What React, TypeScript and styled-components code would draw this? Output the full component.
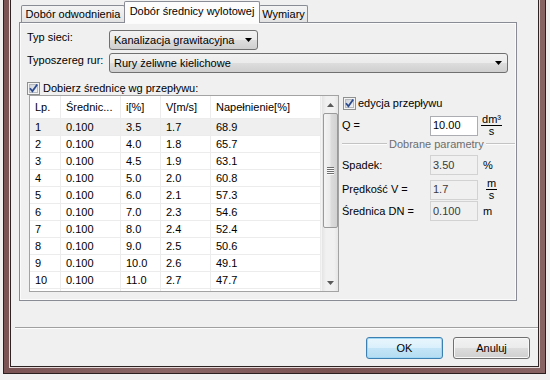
import React from 'react';
import styled, { createGlobalStyle } from 'styled-components';

const GlobalStyle = createGlobalStyle`
  html, body { margin: 0; padding: 0; background: #f0f0f0; }
  body {
    font-family: "Liberation Sans", Arial, sans-serif;
    font-size: 11px;
    color: #000;
    overflow: hidden;
  }
  * { box-sizing: border-box; }
`;

const Screen = styled.div`
  width: 550px;
  height: 380px;
  padding-left: 3px;
  background: #f0f0f0;
`;

const Frame = styled.div`
  width: 543px;
  height: 374px;
  border: 1px solid #2b1f1f;
  border-top: none;
  background: linear-gradient(90deg, #7a5454, #8a6666 30%, #785151 60%, #886363);
  padding: 0 5px 5px;
`;

const FrameInner = styled.div`
  height: 100%;
  border: 1px solid #e6d9d9;
  border-top: none;
`;

const Client = styled.div`
  height: 100%;
  border: 1px solid #2e2424;
  border-top: none;
  background: #f0f0f0;
  display: flex;
  flex-direction: column;
`;

const TabRow = styled.div`
  height: 22px;
  padding-left: 10px;
  display: flex;
  align-items: flex-end;
`;

const Tab = styled.div<{ $active?: boolean; $w: number }>`
  position: relative;
  width: ${p => p.$w}px;
  height: ${p => (p.$active ? 22 : 17)}px;
  margin-left: -1px;
  margin-bottom: ${p => (p.$active ? -1 : 0)}px;
  z-index: ${p => (p.$active ? 2 : 1)};
  border: 1px solid #898c95;
  border-bottom: none;
  border-radius: 2px 2px 0 0;
  background: ${p =>
    p.$active ? '#fcfcfc' : 'linear-gradient(#f4f4f4, #ececec 50%, #e2e2e2)'};
  display: flex;
  justify-content: center;
  padding-top: ${p => (p.$active ? 3 : 2)}px;
  line-height: 13px;
  white-space: nowrap;
  &:first-child { margin-left: 0; }
`;

const Panel = styled.div`
  margin-left: 8px;
  width: 498px;
  height: 279px;
  border: 1px solid #898c95;
  box-shadow: inset 0 0 0 1px #fbfbfb;
  background: #f0f0f0;
  padding: 7px 0 0 7px;
`;

const FormGrid = styled.div`
  display: grid;
  grid-template-columns: 82px auto;
  row-gap: 3px;
  align-items: start;
`;

const Label = styled.div`
  line-height: 13px;
  padding-top: 1px;
  white-space: nowrap;
`;

const Combo = styled.div<{ $w: number }>`
  width: ${p => p.$w}px;
  height: 20px;
  border: 1px solid #707070;
  border-radius: 3px;
  background: linear-gradient(#f2f2f2, #ebebeb 50%, #dddddd 51%, #cfcfcf);
  display: flex;
  align-items: center;
  justify-content: space-between;
  padding: 0 5px 0 4px;
  line-height: 13px;
  white-space: nowrap;
`;

const CheckRow = styled.div<{ $top: number; $gap: number; $left?: number }>`
  display: flex;
  align-items: center;
  gap: ${p => p.$gap}px;
  height: 13px;
  margin-top: ${p => p.$top}px;
  margin-left: ${p => p.$left ?? 0}px;
  line-height: 13px;
  white-space: nowrap;
`;

const BottomArea = styled.div`
  display: flex;
  align-items: flex-start;
`;

const GridBox = styled.div`
  margin-left: 2px;
  width: 310px;
  height: 197px;
  border: 1px solid #a3a3a3;
  background: #fff;
  display: flex;
`;

const Table = styled.div`
  width: 291px;
  height: 100%;
  overflow: hidden;
  display: grid;
  grid-template-columns: 31px 60px 40px 50px 110px;
  grid-template-rows: 23px;
  grid-auto-rows: 17px;
  align-content: start;
`;

const Cell = styled.div<{ $head?: boolean; $sel?: boolean }>`
  height: ${p => (p.$head ? 23 : 17)}px;
  border-right: 1px solid #ececec;
  border-bottom: 1px solid #ececec;
  background: ${p => (p.$sel ? '#efefef' : '#fff')};
  padding-left: 5px;
  display: flex;
  align-items: center;
  line-height: 13px;
  white-space: nowrap;
  overflow: hidden;
`;

const Track = styled.div`
  width: 17px;
  height: 100%;
  background: linear-gradient(90deg, #e4e4e4, #f1f1f1 25%, #f1f1f1 75%, #e6e6e6);
  border-left: 1px solid #f4f4f4;
  display: flex;
  flex-direction: column;
  align-items: center;
`;

const ArrowBtn = styled.div`
  width: 16px;
  height: 17px;
  display: flex;
  align-items: center;
  justify-content: center;
`;

const Thumb = styled.div`
  width: 15px;
  height: 115px;
  border: 1px solid #9a9a9a;
  border-radius: 2px;
  background: linear-gradient(90deg, #f4f4f4, #ebebeb 45%, #dcdcdc 55%, #d2d2d2);
  display: flex;
  align-items: center;
  justify-content: center;
`;

const TrackSpacer = styled.div`
  flex: 1;
`;

const RightCol = styled.div`
  margin-left: 3px;
  width: 173px;
  padding-top: 2px;
  display: flex;
  flex-direction: column;
`;

const FieldRow = styled.div<{ $top: number }>`
  display: grid;
  grid-template-columns: 84px 48px auto;
  column-gap: 4px;
  align-items: center;
  height: 20px;
  margin-top: ${p => p.$top}px;
  line-height: 13px;
  white-space: nowrap;
`;

const TextBox = styled.div<{ $ro?: boolean }>`
  width: 48px;
  height: 20px;
  border: 1px solid ${p => (p.$ro ? '#d2d2d2' : '#abadb3')};
  background: ${p => (p.$ro ? '#f0f0f0' : '#fff')};
  color: ${p => (p.$ro ? '#3a3a3a' : '#000')};
  padding-left: 2px;
  display: flex;
  align-items: center;
  line-height: 13px;
`;

const Fraction = styled.div`
  display: inline-flex;
  flex-direction: column;
  align-items: center;
  width: 19px;
  line-height: 11px;
`;

const FracTop = styled.span`
  border-bottom: 1px solid #000;
  padding: 0 1px;
`;

const Unit = styled.span`
  padding-left: 1px;
`;

const GroupHead = styled.div`
  display: flex;
  align-items: center;
  height: 14px;
  margin-top: 3px;
  color: #6d6d6d;
  line-height: 13px;
  white-space: nowrap;
`;

const GroupLine = styled.div<{ $w?: number }>`
  ${p => (p.$w ? `width: ${p.$w}px;` : 'flex: 1;')}
  height: 2px;
  border-top: 1px solid #c3c3c3;
  border-bottom: 1px solid #fcfcfc;
`;

const GroupText = styled.span`
  margin: 0 2px;
`;

const Separator = styled.div`
  margin: 26px 0 0 4px;
  height: 2px;
  border-top: 1px solid #a0a0a0;
  border-bottom: 1px solid #fdfdfd;
`;

const ButtonRow = styled.div`
  margin-top: 8px;
  display: flex;
  justify-content: flex-end;
  gap: 10px;
  padding-right: 8px;
`;

const Button = styled.div<{ $default?: boolean }>`
  width: 77px;
  height: 22px;
  border: 1px solid ${p => (p.$default ? '#3c7fb1' : '#707070')};
  border-radius: 3px;
  background: ${p =>
    p.$default
      ? 'linear-gradient(#eaf6fd, #d9f0fc 50%, #c4e5f6 51%, #b4dcf2)'
      : 'linear-gradient(#f2f2f2, #ebebeb 50%, #dddddd 51%, #cfcfcf)'};
  box-shadow: ${p => (p.$default ? 'inset 0 0 0 1px #9fd8f4' : 'inset 0 0 0 1px #f8f8f8')};
  display: flex;
  align-items: center;
  justify-content: center;
  line-height: 13px;
`;

const CheckBox = () => (
  <svg width="13" height="13" viewBox="0 0 13 13">
    <defs>
      <linearGradient id="cbfill" x1="0" y1="0" x2="1" y2="1">
        <stop offset="0" stopColor="#cdd1d6" />
        <stop offset="1" stopColor="#f7f7f7" />
      </linearGradient>
    </defs>
    <rect x="0.5" y="0.5" width="12" height="12" fill="#f4f4f4" stroke="#8e8f8f" />
    <rect x="2.5" y="2.5" width="8" height="8" fill="url(#cbfill)" stroke="#b5b9be" />
    <path d="M3 6.3 L5.4 9.3 L10.2 2.4" fill="none" stroke="#2b4b90" strokeWidth="1.8" />
  </svg>
);

const DropArrow = () => (
  <svg width="7" height="4" viewBox="0 0 7 4">
    <path d="M0 0 H7 L3.5 4 Z" fill="#000" />
  </svg>
);

const ScrollArrow = ({ up }: { up?: boolean }) => (
  <svg width="7" height="4" viewBox="0 0 7 4">
    <path d={up ? 'M0 4 H7 L3.5 0 Z' : 'M0 0 H7 L3.5 4 Z'} fill="#5a5a5a" />
  </svg>
);

const Grip = () => (
  <svg width="7" height="8" viewBox="0 0 7 8">
    {[0, 2, 4, 6].map(y => (
      <g key={y}>
        <rect x="0" y={y} width="7" height="1" fill="#6e6e6e" />
        <rect x="0" y={y + 1} width="7" height="1" fill="#fafafa" />
      </g>
    ))}
  </svg>
);

const rows = [
  ['1', '0.100', '3.5', '1.7', '68.9'],
  ['2', '0.100', '4.0', '1.8', '65.7'],
  ['3', '0.100', '4.5', '1.9', '63.1'],
  ['4', '0.100', '5.0', '2.0', '60.8'],
  ['5', '0.100', '6.0', '2.1', '57.3'],
  ['6', '0.100', '7.0', '2.3', '54.6'],
  ['7', '0.100', '8.0', '2.4', '52.4'],
  ['8', '0.100', '9.0', '2.5', '50.6'],
  ['9', '0.100', '10.0', '2.6', '49.1'],
  ['10', '0.100', '11.0', '2.7', '47.7'],
  ['', '', '', '', ''],
];

const headers = ['Lp.', 'Średnic...', 'i[%]', 'V[m/s]', 'Napełnienie[%]'];

export default function App() {
  return (
    <>
      <GlobalStyle />
      <Screen>
        <Frame>
          <FrameInner>
            <Client>
              <TabRow>
                <Tab $w={104}>Dobór odwodnienia</Tab>
                <Tab $w={136} $active>Dobór średnicy wylotowej</Tab>
                <Tab $w={49}>Wymiary</Tab>
              </TabRow>
              <Panel>
                <FormGrid>
                  <Label>Typ sieci:</Label>
                  <Combo $w={149}>
                    <span>Kanalizacja grawitacyjna</span>
                    <DropArrow />
                  </Combo>
                  <Label>Typoszereg rur:</Label>
                  <Combo $w={399}>
                    <span>Rury żeliwne kielichowe</span>
                    <DropArrow />
                  </Combo>
                </FormGrid>
                <CheckRow $top={9} $gap={3}>
                  <CheckBox />
                  <span>Dobierz średnicę wg przepływu:</span>
                </CheckRow>
                <BottomArea>
                  <GridBox>
                    <Table>
                      {headers.map(h => (
                        <Cell key={h} $head>{h}</Cell>
                      ))}
                      {rows.map((r, i) =>
                        r.map((v, j) => (
                          <Cell key={`${i}-${j}`} $sel={i === 0}>{v}</Cell>
                        ))
                      )}
                    </Table>
                    <Track>
                      <ArrowBtn><ScrollArrow up /></ArrowBtn>
                      <Thumb><Grip /></Thumb>
                      <TrackSpacer />
                      <ArrowBtn><ScrollArrow /></ArrowBtn>
                    </Track>
                  </GridBox>
                  <RightCol>
                    <CheckRow $top={0} $gap={2} $left={1}>
                      <CheckBox />
                      <span>edycja przepływu</span>
                    </CheckRow>
                    <FieldRow $top={4}>
                      <span>Q =</span>
                      <TextBox>10.00</TextBox>
                      <Fraction>
                        <FracTop>dm³</FracTop>
                        <span>s</span>
                      </Fraction>
                    </FieldRow>
                    <GroupHead>
                      <GroupLine $w={45} />
                      <GroupText>Dobrane parametry</GroupText>
                      <GroupLine />
                    </GroupHead>
                    <FieldRow $top={4}>
                      <span>Spadek:</span>
                      <TextBox $ro>3.50</TextBox>
                      <Unit>%</Unit>
                    </FieldRow>
                    <FieldRow $top={3}>
                      <span>Prędkość V =</span>
                      <TextBox $ro>1.7</TextBox>
                      <Fraction>
                        <FracTop>m</FracTop>
                        <span>s</span>
                      </Fraction>
                    </FieldRow>
                    <FieldRow $top={3}>
                      <span>Średnica DN =</span>
                      <TextBox $ro>0.100</TextBox>
                      <Unit>m</Unit>
                    </FieldRow>
                  </RightCol>
                </BottomArea>
              </Panel>
              <Separator />
              <ButtonRow>
                <Button $default>OK</Button>
                <Button>Anuluj</Button>
              </ButtonRow>
            </Client>
          </FrameInner>
        </Frame>
      </Screen>
    </>
  );
}
